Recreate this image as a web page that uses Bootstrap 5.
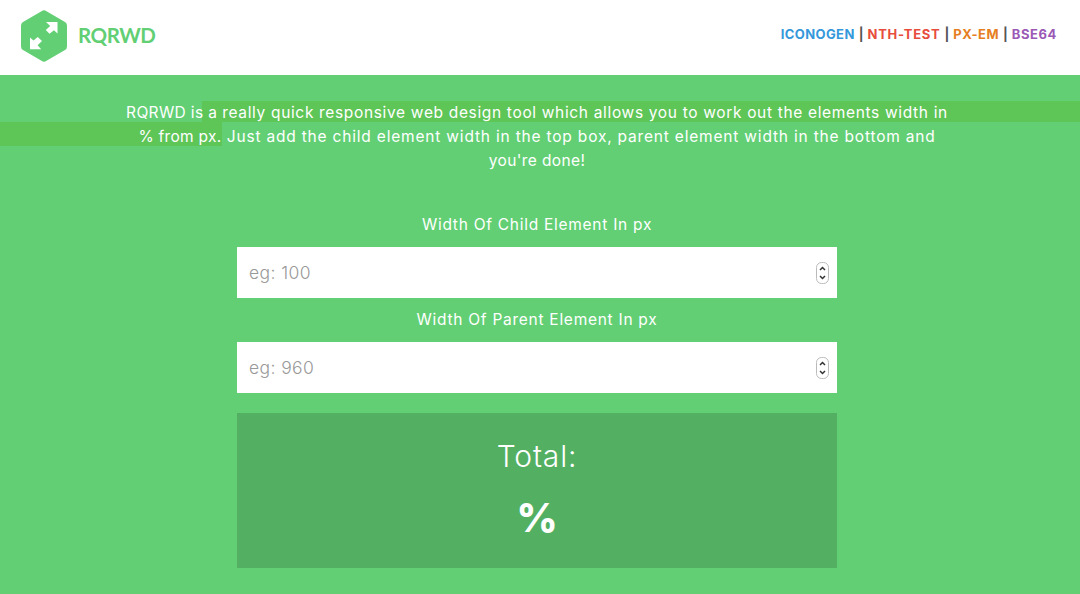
<!DOCTYPE html>
<html lang="en">
<head>
<meta charset="utf-8">
<meta name="viewport" content="width=device-width, initial-scale=1">
<title>RQRWD</title>
<link href="https://cdn.jsdelivr.net/npm/bootstrap@5.3.0/dist/css/bootstrap.min.css" rel="stylesheet">
<style>
body{background:#62cf74;font-family:Inter,"Work Sans",sans-serif;color:#fff;height:594px;overflow:hidden}
.topbar{height:75px;background:#fff;padding:0 23px 0 21px}
.brand-link{margin-top:-4px}
.brand-name{font:700 20.5px/30px Lato,sans-serif;color:#62cf74;margin:-1px 0 0 11px;letter-spacing:-.4px}
.tools{font-size:13px;font-weight:700;line-height:20px;color:#555;margin-top:-7px;white-space:nowrap}
.tools a{text-decoration:none}
.c-blue{color:#3498db;letter-spacing:.4px}.c-red{color:#e74c3c;letter-spacing:.72px}.c-orange{color:#e67e22;letter-spacing:.4px}.c-purple{color:#9b59b6;letter-spacing:.6px}
.intro{margin-top:26px;height:72px;font-size:15.5px;font-weight:400;line-height:24px;padding-right:6px;
background:linear-gradient(#5ec557,#5ec557) 202px 0/878px 21px no-repeat,linear-gradient(#5ec557,#5ec557) 0 21px/222px 24px no-repeat}
.intro>span{display:block;height:24px;white-space:nowrap}
.l1{letter-spacing:.66px}.l2{letter-spacing:.81px}.l3{letter-spacing:.38px}
.l1a{letter-spacing:.35px}.l2a{letter-spacing:.3px}
.calc{width:600px;margin:40px 243px 0 237px}
.calc label{display:block;height:34px;line-height:24px;font-size:15.5px;letter-spacing:.73px}
.calc .form-control{height:51px;border:0;border-radius:0;padding:0 12px;font-size:17.5px;font-weight:300;font-family:inherit;letter-spacing:.4px;appearance:textfield;color:#555}
.calc .form-control::placeholder{color:#999}
.calc input::-webkit-inner-spin-button{display:none}
.stepper{right:8px;top:15px;width:13px;height:22px}
.second{margin-top:10px}
.total{height:155px;margin-top:20px;background:#53b063;padding-top:22px}
.total-label{font-size:30px;line-height:42px;font-weight:300;letter-spacing:.8px}
.total-value{font-size:40px;line-height:50px;font-weight:800;margin-top:16px}
</style>
</head>
<body>
<header class="topbar d-flex align-items-center justify-content-between">
  <a href="#" class="brand-link d-flex align-items-center text-decoration-none">
    <svg width="46" height="52" viewBox="0 0 46 52"><path d="M20.5 1.2Q23-.5 25.500 1.200L44 12Q46 13.200 46 15.500V36.500Q46 38.800 44 40L25.500 50.800Q23 52.500 20.500 50.800L2 40Q0 38.800 0 36.500V15.500Q0 13.200 2 12Z" fill="#62cf74"/><path d="M25 12.100H36.500V23.500L33 20.300L28.500 23.800L24.800 19.900L29.200 16.100Z" fill="#fff"/><path d="M9 39.300V27.500L12.500 30.500L16.800 27L21 31L16.600 35.200L20.200 39.300Z" fill="#fff"/></svg>
    <span class="brand-name">RQRWD</span>
  </a>
  <nav class="tools d-flex">
    <a href="#" class="c-blue">ICONOGEN</a><span class="px-1">|</span><a href="#" class="c-red">NTH-TEST</a><span class="px-1">|</span><a href="#" class="c-orange">PX-EM</a><span class="px-1">|</span><a href="#" class="c-purple">BSE64</a>
  </nav>
</header>
<main class="text-center">
  <p class="intro mb-0"><span class="l1"><span class="l1a">RQRWD is a</span> really quick responsive web design tool which allows you to work out the elements width in</span> <span class="l2"><span class="l2a">% from px.</span> Just add the child element width in the top box, parent element width in the bottom and</span> <span class="l3">you're done!</span></p>
  <form class="calc">
    <label for="child">Width Of Child Element In px</label>
    <div class="position-relative">
      <input id="child" type="number" class="form-control" placeholder="eg: 100">
      <svg class="stepper position-absolute" viewBox="0 0 13 22" fill="none"><rect x=".5" y=".5" width="12" height="21" rx="5" stroke="#bbb"/><path d="M4 8L6.500 5.500L9 8M4 14L6.500 16.500L9 14" stroke="#333" stroke-width="1.500"/></svg>
    </div>
    <label for="parent" class="second">Width Of Parent Element In px</label>
    <div class="position-relative">
      <input id="parent" type="number" class="form-control" placeholder="eg: 960">
      <svg class="stepper position-absolute" viewBox="0 0 13 22" fill="none"><rect x=".5" y=".5" width="12" height="21" rx="5" stroke="#bbb"/><path d="M4 8L6.500 5.500L9 8M4 14L6.500 16.500L9 14" stroke="#333" stroke-width="1.500"/></svg>
    </div>
    <div class="total">
      <div class="total-label">Total:</div>
      <div class="total-value">%</div>
    </div>
  </form>
</main>
<script src="https://cdn.jsdelivr.net/npm/bootstrap@5.3.0/dist/js/bootstrap.bundle.min.js"></script>
</body>
</html>
